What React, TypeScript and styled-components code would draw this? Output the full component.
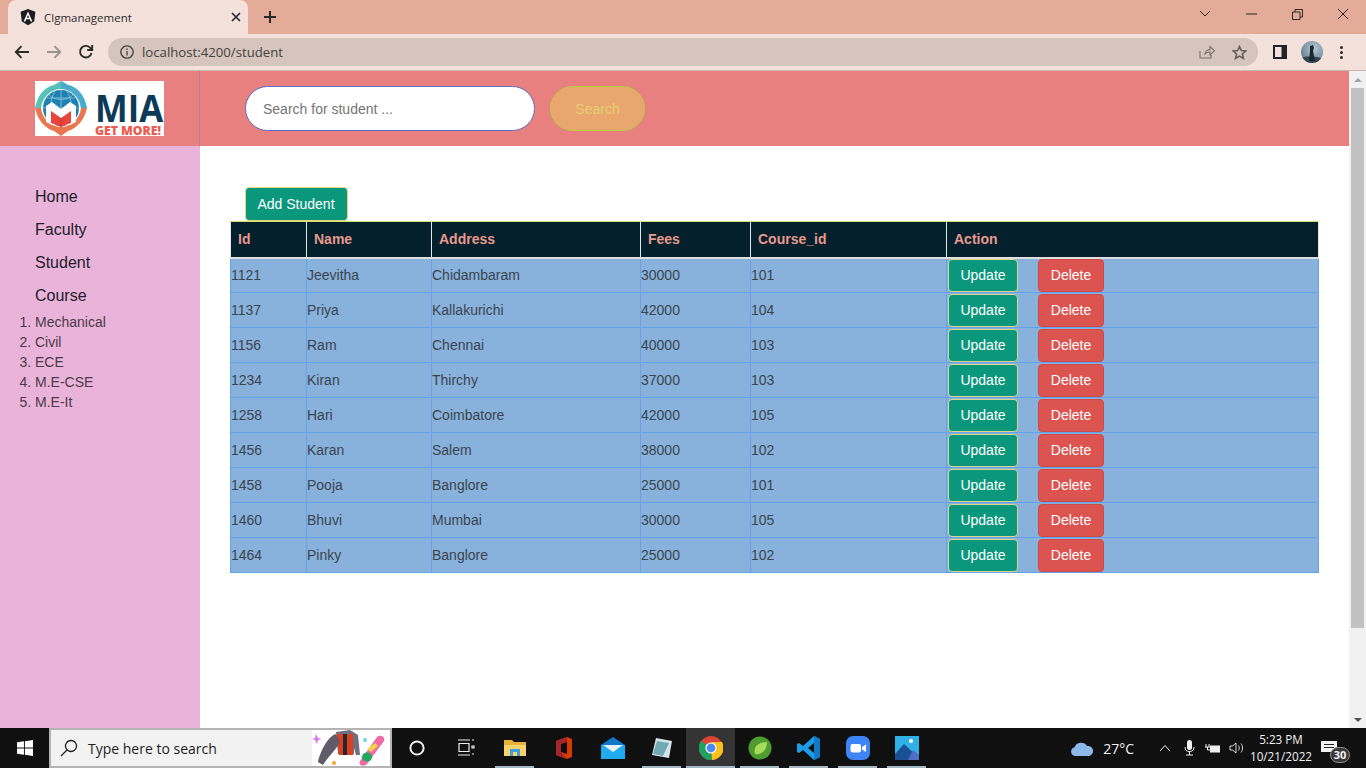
import React from 'react';
import styled, { createGlobalStyle } from 'styled-components';

const GlobalStyle = createGlobalStyle`
  html, body { margin: 0; padding: 0; height: 100%; overflow: hidden; }
  body { font-family: "Liberation Sans", Arial, sans-serif; }
  * { box-sizing: border-box; }
`;

const Screen = styled.div`
  width: 1366px;
  height: 768px;
  display: flex;
  flex-direction: column;
  overflow: hidden;
`;

/* browser chrome */
const TabStrip = styled.div`
  height: 34px;
  background: #e3ab98;
  display: flex;
  padding-left: 8px;
  flex: none;
`;

const Tab = styled.div`
  width: 240px;
  height: 34px;
  background: #f5e1db;
  border-radius: 8px 8px 0 0;
  display: flex;
  align-items: center;
  padding: 0 0 0 12px;
  color: #2c2c2c;
  font-family: "Open Sans", "Liberation Sans", sans-serif;
  font-size: 11.5px;
`;

const TabTitle = styled.span`
  margin-left: 8px;
  flex: 1;
`;

const NewTab = styled.div`
  margin-left: 12px;
  width: 20px;
  height: 34px;
  display: flex;
  align-items: center;
  justify-content: center;
`;

const WindowButtons = styled.div`
  margin-left: auto;
  display: flex;
  height: 28px;
  align-items: center;
`;

const WindowButton = styled.div`
  width: 46px;
  display: flex;
  justify-content: center;
`;

const Toolbar = styled.div`
  height: 37px;
  background: #f5e1db;
  border-bottom: 1px solid #c9b8b2;
  display: flex;
  align-items: center;
  padding-left: 12px;
  flex: none;
`;

const NavButton = styled.div`
  width: 20px;
  height: 20px;
  margin-right: 12px;
  display: flex;
  align-items: center;
  justify-content: center;
`;

const AddressBar = styled.div`
  width: 1150px;
  height: 28px;
  margin-left: 0;
  background: #d6c5bd;
  border-radius: 14px;
  display: flex;
  align-items: center;
  padding: 0 9px 0 12px;
  font-family: "Open Sans", "Liberation Sans", sans-serif;
  font-size: 13.2px;
  color: #454140;
`;

const Url = styled.span`
  margin-left: 8px;
  flex: 1;
`;

const AddressIcon = styled.div`
  width: 20px;
  display: flex;
  justify-content: center;
  margin-left: 12px;
`;

const ToolbarRight = styled.div`
  display: flex;
  align-items: center;
  margin-left: 15px;
`;

const AvatarSlot = styled.div`
  width: 22px;
  height: 22px;
  margin-left: 14px;
  display: flex;
`;

const MenuDots = styled.div`
  margin-left: 17px;
  display: flex;
  flex-direction: column;
  gap: 2px;
  span {
    width: 3px;
    height: 3px;
    border-radius: 50%;
    background: #2a2a2a;
  }
`;

/* page */
const Viewport = styled.div`
  flex: 1;
  display: flex;
  min-height: 0;
`;

const Page = styled.div`
  flex: 1;
  display: flex;
  flex-direction: column;
  background: #fff;
  min-width: 0;
`;

const Scrollbar = styled.div`
  width: 17px;
  background: #f1f1f1;
  display: flex;
  flex-direction: column;
  align-items: center;
  flex: none;
`;

const ScrollArrow = styled.div<{ $down?: boolean }>`
  height: 17px;
  display: flex;
  align-items: center;
  justify-content: center;
  flex: none;
  &::before {
    content: '';
    border-left: 4px solid transparent;
    border-right: 4px solid transparent;
    ${p => (p.$down ? 'border-top: 4px solid #505050;' : 'border-bottom: 4px solid #a3a3a3;')}
  }
`;

const ScrollThumb = styled.div`
  width: 13px;
  height: 540px;
  background: #c1c1c1;
`;

const ScrollSpace = styled.div`
  flex: 1;
`;

const Header = styled.header`
  height: 75px;
  background: #e88080;
  display: flex;
  flex: none;
`;

const Brand = styled.div`
  width: 200px;
  border-right: 1px solid #b47f9c;
  padding: 10px 0 0 35px;
  flex: none;
`;

const LogoBox = styled.div`
  width: 129px;
  height: 55px;
  background: #fff;
`;

const SearchForm = styled.div`
  display: flex;
  align-items: center;
  padding-left: 45px;
`;

const SearchInput = styled.input`
  width: 290px;
  height: 45px;
  border-radius: 23px;
  border: 1.5px solid #5b6fc4;
  background: #fff;
  padding: 0 17px;
  font: 14px "Liberation Sans", Arial, sans-serif;
  outline: none;
  &::placeholder { color: #757575; opacity: 1; }
`;

const SearchButton = styled.button`
  width: 95px;
  height: 45px;
  margin-left: 15px;
  border-radius: 23px;
  border: 1.5px solid #b5cf3f;
  background: #e9a66f;
  color: #e4d070;
  font: 14px "Liberation Sans", Arial, sans-serif;
`;

const Body = styled.div`
  flex: 1;
  display: flex;
  min-height: 0;
`;

const Sidebar = styled.nav`
  width: 200px;
  background: #eab4da;
  padding-top: 34px;
  flex: none;
`;

const NavLink = styled.div`
  height: 33px;
  line-height: 33px;
  padding-left: 35px;
  font-size: 16px;
  color: #1c1c2a;
`;

const CourseList = styled.ol`
  margin: 0;
  padding: 0 0 0 35px;
  font-size: 14px;
  line-height: 20px;
  color: #4a3a48;
`;

const Main = styled.main`
  flex: 1;
  padding: 41px 30px 0 30px;
`;

const AddButton = styled.button`
  display: block;
  margin-left: 15px;
  width: 103px;
  height: 34px;
  background: #0a977c;
  border: 1px solid #e3d77c;
  border-radius: 4px;
  color: #fff;
  font: 14px "Liberation Sans", Arial, sans-serif;
  padding: 0 1px 0 0;
`;

const Table = styled.table`
  width: 1088px;
  border-collapse: collapse;
  table-layout: fixed;
  font-size: 14px;
`;

const HeadCell = styled.th<{ $w: number }>`
  width: ${p => p.$w}px;
  height: 36px;
  background: #04202c;
  color: #e89a8c;
  text-align: left;
  font-size: 14px;
  font-weight: 700;
  padding: 0 7px;
  border-top: 1px solid #d5df6a;
  border-left: 1px solid #e6e6e6;
  border-right: 1px solid #e6e6e6;
  border-bottom: 2px solid #dedede;
`;

const Row = styled.tr`
  height: 35px;
  background: #88b2dc;
`;

const Cell = styled.td`
  padding: 0 1px 0 0;
  color: #3b444e;
  border: 1px solid #63a3ec;
  white-space: nowrap;
`;

const ActionCell = styled(Cell)`
  padding: 0 0 0 1px;
  font-size: 0;
`;

const ActionButton = styled.button<{ $danger?: boolean }>`
  height: 33px;
  width: ${p => (p.$danger ? '66px' : '70px')};
  margin-left: ${p => (p.$danger ? '20px' : '0')};
  vertical-align: top;
  background: ${p => (p.$danger ? '#dc5450' : '#0a977c')};
  border: 1px solid ${p => (p.$danger ? '#ce4a4a' : '#dcd68a')};
  border-radius: 4px;
  color: #fff;
  font: 14px "Liberation Sans", Arial, sans-serif;
  padding: 0;
`;

/* windows taskbar */
const Taskbar = styled.div`
  height: 40px;
  background: #101010;
  display: flex;
  flex: none;
  color: #f0f0f0;
  font-family: "Open Sans", "Liberation Sans", sans-serif;
`;

const StartButton = styled.div`
  width: 49px;
  display: flex;
  align-items: center;
  justify-content: center;
`;

const TaskSearch = styled.div`
  width: 343px;
  background: #f2f2f2;
  border: 2px solid #b4b4b4;
  display: flex;
  align-items: center;
  padding-left: 9px;
  color: #1e1e1e;
  font-size: 14px;
`;

const SearchLabel = styled.span`
  margin-left: 10px;
  flex: 1;
`;

const SearchArt = styled.div`
  width: 78px;
  height: 100%;
  background: #fff;
`;

const TaskIcon = styled.div<{ $active?: boolean; $open?: boolean }>`
  position: relative;
  width: 49px;
  display: flex;
  align-items: center;
  justify-content: center;
  background: ${p => (p.$active ? '#343434' : 'transparent')};
  &::after {
    content: '';
    display: ${p => (p.$open ? 'block' : 'none')};
    position: absolute;
    bottom: 0;
    left: ${p => (p.$active ? '0' : '5px')};
    right: ${p => (p.$active ? '0' : '5px')};
    height: 2px;
    background: #a3b8c4;
  }
`;

const Tray = styled.div`
  margin-left: auto;
  display: flex;
  align-items: center;
`;

const Temp = styled.span`
  font-size: 14px;
  margin: 0 19px 0 9px;
`;

const TrayIcon = styled.div`
  width: 24px;
  display: flex;
  justify-content: center;
`;

const Clock = styled.div`
  width: 64px;
  text-align: center;
  font-size: 11.7px;
  line-height: 17px;
  white-space: nowrap;
`;

const Notify = styled.div`
  position: relative;
  width: 40px;
  height: 40px;
  margin-right: 13px;
  padding: 10px 0 0 8px;
`;

const NotifyBadge = styled.span`
  position: absolute;
  left: 17px;
  top: 19px;
  width: 20px;
  height: 16px;
  border-radius: 8px;
  background: #3a3a3a;
  border: 1px solid #8a8a8a;
  color: #f2f2f2;
  font-size: 11px;
  font-weight: 700;
  line-height: 14px;
  text-align: center;
`;

const AngularIcon = () => (
  <svg width="16" height="17" viewBox="0 0 16 17">
    <path d="M8 0 L15.4 2.7 L14.2 12.6 L8 16.2 L1.8 12.6 L.6 2.7 Z" fill="#1d1d22" />
    <path d="M8 2.6 L3.6 12.4 H5.3 L6.2 10.2 H9.8 L10.7 12.4 H12.4 Z M8 6 L9.2 8.8 H6.8 Z" fill="#fff" fillRule="evenodd" />
  </svg>
);

const Glyph = ({ d, w = 16, h = 16, color = '#2a2a2a', sw = 1.8, vb }: { d: string; w?: number; h?: number; color?: string; sw?: number; vb?: string }) => (
  <svg width={w} height={h} viewBox={vb || `0 0 ${w} ${h}`} fill="none" stroke={color} strokeWidth={sw}>
    <path d={d} />
  </svg>
);

const MiaLogo = () => (
  <svg width="129" height="55" viewBox="0 0 129 55">
    {/* compass ring */}
    <path d="M26 0 L33 4 C42 6 49 13 52 27 L46 27 C45 16 36 8 26 8 C16 8 7 16 6 27 L0 27 C3 13 10 6 19 4 Z" fill="#55c2b8" />
    <path d="M26 0 L33 4 C42 6 49 13 52 27 L46 27 C45 16 36 8 26 8 Z" fill="#4aa9cf" />
    <path d="M0 27 L6 27 C7 38 16 46 26 46 C36 46 45 38 46 27 L52 27 C49 40 42 47 33 50 L26 55 L19 50 C10 47 3 40 0 27 Z" fill="#e9764f" />
    <circle cx="26" cy="27" r="18" fill="#1f80b2" />
    <path d="M8 27 H44 M26 9 V45 M12 17 H40 M14 14 C20 20 32 20 38 14 M20 10 C14 20 14 34 20 44 M32 10 C38 20 38 34 32 44" stroke="#8cc5de" strokeWidth="0.8" fill="none" />
    {/* M and book */}
    <path d="M11 25 L17 21 L26 28 L35 21 L41 25 V41 L35 44 H17 L11 41 Z" fill="#fff" />
    <path d="M16 30 L26 37 L36 30 V42 L26 46 L16 42 Z" fill="#e8453c" />
    <path d="M26 37 V46" stroke="#b5342c" strokeWidth="0.8" />
    <text transform="translate(60 41) scale(1.02 1.1)" fontFamily="Open Sans, Liberation Sans, sans-serif" fontWeight="700" fontSize="34" fill="#0d3a58">MIA</text>
    <text transform="translate(60 54) scale(1.06 1)" fontFamily="Open Sans, Liberation Sans, sans-serif" fontWeight="800" fontSize="11.5" fill="#ec5a4e">GET MORE!</text>
  </svg>
);

const WinLogo = () => (
  <svg width="16" height="16" viewBox="0 0 17 17" fill="#fff">
    <path d="M0 2.4 L7.4 1.4 V8 H0 Z M8.4 1.2 L17 0 V8 H8.4 Z M0 9 H7.4 V15.6 L0 14.6 Z M8.4 9 H17 V17 L8.4 15.8 Z" />
  </svg>
);

const SearchArtwork = () => (
  <svg width="74" height="36" viewBox="0 0 74 36">
    <path d="M4 4 L6 8 L10 9 L6 10 L5 14 L3 10 L0 9 L3 8 Z" fill="#dd77ee" />
    <path d="M24 2 L38 0 L46 5 L48 25 H44 L42 18 V24 H26 Z" fill="#6f6f80" />
    <path d="M25 4 H41 V25 H27 Z" fill="#d9401f" />
    <path d="M31 4 H35 V25 H31 Z" fill="#262630" />
    <path d="M24 4 C16 6 8 22 6 32 L11 35 C15 28 24 20 28 12 Z" fill="#5f5b68" />
    <circle cx="53" cy="10" r="2" fill="#6fd4e8" />
    <circle cx="22" cy="33" r="2" fill="#f4a522" />
    <path d="M48 31 L65 7 C68 4 74 7 72 11 L55 34 C52 37 46 36 48 31 Z" fill="#f06aa6" />
    <ellipse cx="55" cy="27" rx="5" ry="4.5" fill="#22a85a" />
    <path d="M55 19 L63 13 L66 16 L59 22 Z" fill="#f3d34a" />
  </svg>
);

const TaskSvg = ({ children }: { children: React.ReactNode }) => (
  <svg width="26" height="26" viewBox="0 0 26 26">{children}</svg>
);

const navItems = ['Home', 'Faculty', 'Student', 'Course'];
const courses = ['Mechanical', 'Civil', 'ECE', 'M.E-CSE', 'M.E-It'];
const columns: [string, number][] = [
  ['Id', 76],
  ['Name', 125],
  ['Address', 209],
  ['Fees', 110],
  ['Course_id', 196],
  ['Action', 372],
];
const students = [
  ['1121', 'Jeevitha', 'Chidambaram', '30000', '101'],
  ['1137', 'Priya', 'Kallakurichi', '42000', '104'],
  ['1156', 'Ram', 'Chennai', '40000', '103'],
  ['1234', 'Kiran', 'Thirchy', '37000', '103'],
  ['1258', 'Hari', 'Coimbatore', '42000', '105'],
  ['1456', 'Karan', 'Salem', '38000', '102'],
  ['1458', 'Pooja', 'Banglore', '25000', '101'],
  ['1460', 'Bhuvi', 'Mumbai', '30000', '105'],
  ['1464', 'Pinky', 'Banglore', '25000', '102'],
];

export default function App() {
  return (
    <Screen>
      <GlobalStyle />
      <TabStrip>
        <Tab>
          <AngularIcon />
          <TabTitle>Clgmanagement</TabTitle>
          <Glyph w={24} h={12} d="M8 2 L16 10 M16 2 L8 10" sw={1.7} />
        </Tab>
        <NewTab>
          <Glyph w={14} h={14} d="M7 1 V13 M1 7 H13" sw={2} />
        </NewTab>
        <WindowButtons>
          <WindowButton><Glyph w={12} h={8} d="M1 1 L6 6 L11 1" sw={1} /></WindowButton>
          <WindowButton><Glyph w={11} h={2} d="M0 1 H11" sw={1} /></WindowButton>
          <WindowButton><Glyph w={11} h={11} d="M.5 3 H8 V10.5 H.5 Z M3 3 V.5 H10.5 V8 H8" sw={1} /></WindowButton>
          <WindowButton><Glyph w={12} h={12} d="M1 1 L11 11 M11 1 L1 11" sw={1} /></WindowButton>
        </WindowButtons>
      </TabStrip>

      <Toolbar>
        <NavButton><Glyph w={16} h={14} d="M15 7 H2 M7.5 1.2 L1.8 7 L7.5 12.8" sw={1.9} /></NavButton>
        <NavButton><Glyph w={16} h={14} d="M1 7 H14 M8.5 1.2 L14.2 7 L8.5 12.8" color="#9c918d" sw={1.9} /></NavButton>
        <NavButton><Glyph w={16} h={16} d="M13.5 9 A5.8 5.8 0 1 1 12 3.6 L14 5.6 M14.2 1 V6 H9.2" sw={1.9} /></NavButton>
        <AddressBar>
          <Glyph w={14} h={14} d="M7 .9 A6.1 6.1 0 1 1 6.99 .9 Z M7 6 V10.4 M7 3.4 V5" color="#4c4846" sw={1.4} />
          <Url>localhost:4200/student</Url>
          <AddressIcon><Glyph w={16} h={14} d="M1 6 V13 H12 V10 M6 9 C6 6 9 4.6 11 4.6 V1.6 L15.4 5.8 L11 10 V7 C9 7 7 7.6 6 9 Z" color="#7a716d" sw={1.1} /></AddressIcon>
          <AddressIcon><Glyph w={15} h={15} d="M7.5 1.5 L9.3 5.6 L13.8 6 L10.4 9 L11.4 13.4 L7.5 11.1 L3.6 13.4 L4.6 9 L1.2 6 L5.7 5.6 Z" color="#635c59" sw={1.5} /></AddressIcon>
        </AddressBar>
        <ToolbarRight>
          <svg width="14" height="14" viewBox="0 0 14 14">
            <path d="M0 0 H14 V14 H0 Z" fill="#22222a" />
            <path d="M2 2 H8.5 V12 H2 Z" fill="#f5e1db" />
          </svg>
          <AvatarSlot>
            <svg width="22" height="22" viewBox="0 0 22 22">
              <defs>
                <radialGradient id="sky" cx="60%" cy="35%" r="70%">
                  <stop offset="0" stopColor="#b5c8d0" />
                  <stop offset="1" stopColor="#5f7f92" />
                </radialGradient>
                <clipPath id="round"><circle cx="11" cy="11" r="11" /></clipPath>
              </defs>
              <circle cx="11" cy="11" r="11" fill="url(#sky)" />
              <g clipPath="url(#round)">
                <path d="M0 17 C6 15 16 15 22 18 V22 H0 Z" fill="#33454f" />
                <path d="M9 5 L12 4 L13 7 L12 10 L14 20 H8 L9 10 Z" fill="#1d2730" />
              </g>
            </svg>
          </AvatarSlot>
          <MenuDots><span /><span /><span /></MenuDots>
        </ToolbarRight>
      </Toolbar>

      <Viewport>
        <Page>
          <Header>
            <Brand>
              <LogoBox><MiaLogo /></LogoBox>
            </Brand>
            <SearchForm>
              <SearchInput placeholder="Search for student ..." />
              <SearchButton>Search</SearchButton>
            </SearchForm>
          </Header>
          <Body>
            <Sidebar>
              {navItems.map(item => (
                <NavLink key={item}>{item}</NavLink>
              ))}
              <CourseList>
                {courses.map(course => (
                  <li key={course}>{course}</li>
                ))}
              </CourseList>
            </Sidebar>
            <Main>
              <AddButton>Add Student</AddButton>
              <Table>
                <thead>
                  <tr>
                    {columns.map(([label, w]) => (
                      <HeadCell key={label} $w={w}>{label}</HeadCell>
                    ))}
                  </tr>
                </thead>
                <tbody>
                  {students.map(row => (
                    <Row key={row[0]}>
                      {row.map((value, i) => (
                        <Cell key={i}>{value}</Cell>
                      ))}
                      <ActionCell>
                        <ActionButton>Update</ActionButton>
                        <ActionButton $danger>Delete</ActionButton>
                      </ActionCell>
                    </Row>
                  ))}
                </tbody>
              </Table>
            </Main>
          </Body>
        </Page>
        <Scrollbar>
          <ScrollArrow />
          <ScrollThumb />
          <ScrollSpace />
          <ScrollArrow $down />
        </Scrollbar>
      </Viewport>

      <Taskbar>
        <StartButton><WinLogo /></StartButton>
        <TaskSearch>
          <Glyph w={18} h={18} d="M11 1.5 A5.5 5.5 0 1 1 10.99 1.5 Z M7 11 L1 17" color="#222" sw={1.3} />
          <SearchLabel>Type here to search</SearchLabel>
          <SearchArt><SearchArtwork /></SearchArt>
        </TaskSearch>
        <TaskIcon>
          <svg width="16" height="16" viewBox="0 0 16 16" fill="none" stroke="#eee" strokeWidth="2"><circle cx="8" cy="8" r="6.6" /></svg>
        </TaskIcon>
        <TaskIcon>
          <Glyph w={18} h={18} d="M1 1 H13 M1 16 H13 M2 4.5 H12 V12.5 H2 Z M15 1 H17 M15 7 H17 V9 H15 Z M15 15 H17" color="#eee" sw={1.2} />
        </TaskIcon>
        <TaskIcon $open>
          <TaskSvg>
            <path d="M2 5 H10 L12 7 H24 V21 H2 Z" fill="#e8b23a" />
            <path d="M2 10 H24 V21 H2 Z" fill="#f8d26a" />
            <path d="M8 14 H18 V21 H15 V17 H11 V21 H8 Z" fill="#3ba0dd" />
          </TaskSvg>
        </TaskIcon>
        <TaskIcon>
          <TaskSvg>
            <path d="M5 6 L16 2 L21 4 V22 L16 24 L5 20 Z" fill="#d83b01" />
            <path d="M5 6 L16 2 V7 L10 9 V17 L16 24 L5 20 Z" fill="#a4262c" />
            <path d="M10 9 L16 7 V19 L10 17 Z" fill="#101010" />
          </TaskSvg>
        </TaskIcon>
        <TaskIcon>
          <TaskSvg>
            <path d="M1 10 L13 2 L25 10 V24 H1 Z" fill="#0f78c8" />
            <path d="M1 10 H25 V24 H1 Z" fill="#20aaf0" />
            <path d="M3 10 H23 L13 17 Z" fill="#e8f4fb" />
          </TaskSvg>
        </TaskIcon>
        <TaskIcon $open>
          <TaskSvg>
            <path d="M7 3 L23 6 L20 23 L3 20 Z" fill="#d5e4e8" />
            <path d="M8 6 L20 8 L14 21 L4 19 Z" fill="#6fa9b3" />
          </TaskSvg>
        </TaskIcon>
        <TaskIcon $active $open>
          <svg width="24" height="24" viewBox="0 0 24 24">
            <circle cx="12" cy="12" r="12" fill="#de4437" />
            <path d="M12 12 L1.6 18 A12 12 0 0 0 13 24 Z" fill="#1ea362" />
            <path d="M12 6 H22.9 A12 12 0 0 1 13 24 Z" fill="#fbc116" />
            <path d="M12 12 L1.6 18 A12 12 0 0 1 2 5 Z" fill="#1ea362" />
            <circle cx="12" cy="12" r="5.6" fill="#fff" />
            <circle cx="12" cy="12" r="4.4" fill="#4a89f3" />
          </svg>
        </TaskIcon>
        <TaskIcon $open>
          <TaskSvg>
            <circle cx="13" cy="13" r="11.5" fill="#4e9b2f" />
            <path d="M8 19 C6 12 11 7 20 7 C20 15 15 20 8 19 Z" fill="#a6dc5c" />
          </TaskSvg>
        </TaskIcon>
        <TaskIcon $open>
          <TaskSvg>
            <path d="M18 1 L24 4 V22 L18 25 L7 15 L3 18 L1 17 V9 L3 8 L7 11 Z M18 8 L12 13 L18 18 Z" fill="#1e9be8" fillRule="evenodd" />
            <path d="M18 1 L24 4 V22 L18 25 Z" fill="#0d7cc4" />
          </TaskSvg>
        </TaskIcon>
        <TaskIcon $open>
          <TaskSvg>
            <rect x="1" y="1" width="24" height="24" rx="7" fill="#3d84f6" />
            <rect x="5.5" y="9" width="10.5" height="8.5" rx="2" fill="#fff" />
            <path d="M17 12 L21 9.5 V17 L17 14.5 Z" fill="#fff" />
          </TaskSvg>
        </TaskIcon>
        <TaskIcon $open>
          <TaskSvg>
            <rect x="1" y="1" width="24" height="24" fill="#2fb1e6" />
            <path d="M1 25 V19 L10 9 L25 23 V25 Z" fill="#1c4f94" />
            <path d="M14 25 L19 15 L25 20 V25 Z" fill="#4e6fc8" />
            <circle cx="17" cy="6" r="2" fill="#fff" />
          </TaskSvg>
        </TaskIcon>

        <Tray>
          <svg width="24" height="15" viewBox="0 0 24 15">
            <path d="M5 15 A4.5 4.5 0 0 1 4.5 6.2 A7 7 0 0 1 17 5 A5 5 0 0 1 19 15 Z" fill="#8cb8e8" />
          </svg>
          <Temp>27°C</Temp>
          <TrayIcon><Glyph w={12} h={8} d="M1 7 L6 1.5 L11 7" color="#eee" sw={1} /></TrayIcon>
          <TrayIcon>
            <svg width="11" height="16" viewBox="0 0 11 16">
              <rect x="3" y="0" width="5" height="10" rx="2.5" fill="#f0f0f0" />
              <path d="M1 7 C1 10.5 3 11.5 5.5 11.5 C8 11.5 10 10.5 10 7 M5.5 11.5 V15 M2 15 H9" fill="none" stroke="#f0f0f0" />
            </svg>
          </TrayIcon>
          <TrayIcon>
            <svg width="16" height="11" viewBox="0 0 16 11">
              <rect x="5" y="2.5" width="10" height="7" fill="#f0f0f0" />
              <path d="M1 1 V4 M4 1 V4 M0 4 H5 M2.5 4 V7 H5" fill="none" stroke="#f0f0f0" />
            </svg>
          </TrayIcon>
          <TrayIcon>
            <Glyph w={16} h={14} d="M1 5 H3.5 L7 2 V12 L3.5 9 H1 Z M9.5 4.5 C10.5 6 10.5 8 9.5 9.5 M12 2.5 C14 5 14 9 12 11.5" color="#eee" sw={0.9} />
          </TrayIcon>
          <Clock>5:23 PM<br />10/21/2022</Clock>
          <Notify>
            <svg width="16" height="14" viewBox="0 0 16 14">
              <path d="M0 0 H16 V11 H0 Z" fill="#f2f2f2" />
              <path d="M3 3.5 H13 M3 6.5 H13" stroke="#222" />
            </svg>
            <NotifyBadge>30</NotifyBadge>
          </Notify>
        </Tray>
      </Taskbar>
    </Screen>
  );
}
